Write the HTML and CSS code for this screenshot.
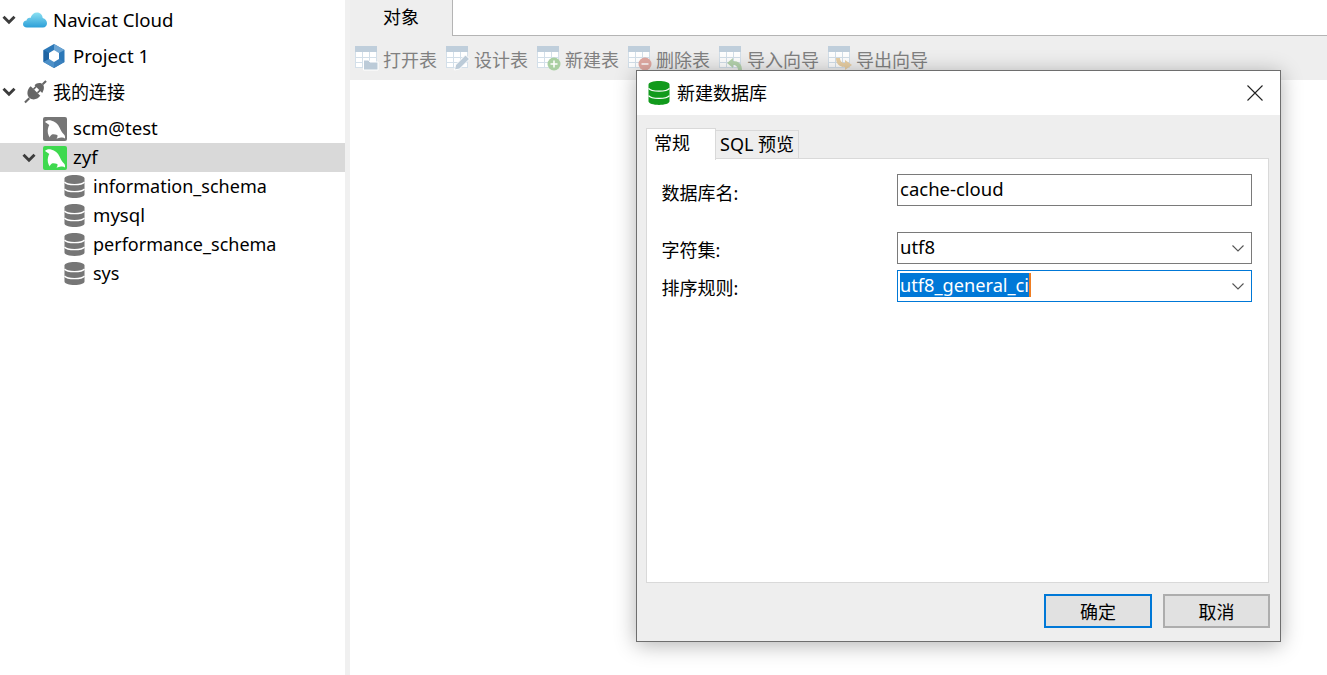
FILE: index.html
```html
<!DOCTYPE html>
<html lang="zh">
<head>
<meta charset="utf-8">
<title>Navicat</title>
<link rel="stylesheet" href="styles.css">
</head>
<body>
<svg class="defs" aria-hidden="true">
  <defs>
    <symbol id="chev" viewBox="0 0 14 10"><path d="M1.500 1.800 7 7.300 12.500 1.800" fill="none" stroke="#3c3c3c" stroke-width="2.900"/></symbol>
    <symbol id="db" viewBox="0 0 22 23" preserveAspectRatio="none">
      <path d="M.5 3.500C.5 1.300 5.500 0 11 0S21.500 1.300 21.500 3.500v16C21.500 21.700 16.500 23 11 23S.5 21.700.5 19.500z" fill="currentColor"/>
      <path d="M.5 7c1.500 1.900 5.500 2.700 10.500 2.700S20 8.900 21.500 7M.5 14c1.500 1.900 5.500 2.700 10.500 2.700s9-.8 10.500-2.700" fill="none" stroke="#fff" stroke-width="1.300"/>
    </symbol>
    <symbol id="dolphin" viewBox="0 0 24 24">
      <rect width="24" height="24" rx="2" fill="currentColor"/>
      <path d="M2 5C3 3.500 6 3 8 3.500 12 4.200 15 7 16.500 10.500 17.500 13 19 15.500 21 17.500 22 18.500 22.200 20 22 21.500 21 20.500 19.500 20.200 18 20.500 16.500 20.800 15 21.300 13.500 21.800 14.500 20.500 14.800 19 14.300 18 12.500 17.500 10.500 17 9 17.500 8 18 7 19 6.800 20.500 5 18 4.200 14.500 5 11.500 5.300 10 5.800 9 6.300 8 5 7 3.500 6 2 5z" fill="#fff"/>
    </symbol>
    <symbol id="table" viewBox="0 0 23 24">
      <rect x=".5" y=".5" width="21" height="21" fill="#fff" stroke="#d3dfe9"/>
      <rect width="22" height="6" fill="#bfcedb"/>
      <path d="M0 11.500h22M0 16.500h22M7.500 6v16M14.500 6v16" stroke="#d3dfe9" fill="none"/>
    </symbol>
  </defs>
</svg>

<div class="app">
  <aside class="sidebar">
    <div class="row row-tall">
      <svg class="chev"><use href="#chev"/></svg>
      <svg class="icon-cloud" viewBox="0 0 24 16">
        <defs><linearGradient id="cloud" x1="0" y1="0" x2="0" y2="1"><stop offset="0" stop-color="#8be0f2"/><stop offset="1" stop-color="#2c9fd8"/></linearGradient></defs>
        <path d="M4 15.500C1.500 15.500 0 14 0 12c0-2 1.500-3.300 3.500-3.500C4 6.500 5.500 5.500 7.500 6 8.500 2.500 11 .5 14 .5c3.500 0 5.500 2.500 5.700 5.500C22.300 6.700 24 9 24 11.300c0 2.500-1.700 4.200-4 4.200z" fill="url(#cloud)"/>
      </svg>
      <span class="label">Navicat Cloud</span>
    </div>
    <div class="row row-tall lvl-1">
      <svg class="icon-hex" viewBox="0 0 22 24">
        <path d="M11 0 21.500 6v12L11 24 .5 18V6z" fill="#2c78b8"/>
        <path d="M11 0 21.500 6 16 9 11 6z" fill="#6ba4d3"/>
        <path d="M.5 6 6 9v6l-5.500 3z" fill="#1f64a3"/>
        <path d="M.5 18 6 15l5 3v6z" fill="#4d90c8"/>
        <path d="M21.500 18 16 15l-5 3v6z" fill="#3a80bd"/>
        <path d="M11 6l5 3v6l-5 3-5-3V9z" fill="#fff"/>
      </svg>
      <span class="label">Project 1</span>
    </div>
    <div class="row row-tall">
      <svg class="chev"><use href="#chev"/></svg>
      <svg class="icon-plug" viewBox="0 0 24 24">
        <path d="M1 23 5.500 18.500M19.500 4 23 .5" stroke="#666" stroke-width="2.200"/>
        <path d="M7 6 17 16C14 20 9 21 5.500 18 2.500 15 3 9.500 7 6z" fill="#666"/>
        <path d="M11 5 19 13C21 10 21.500 6 19.500 4 17.500 2 13.500 2 11 5z" fill="#666"/>
        <path d="M10 9 13 6M14 13l3-3" stroke="#666" stroke-width="1.800"/>
      </svg>
      <span class="label label-cjk">我的连接</span>
    </div>
    <div class="row row-conn lvl-1 first-conn">
      <svg class="icon-conn grey"><use href="#dolphin"/></svg>
      <span class="label">scm@test</span>
    </div>
    <div class="row row-conn lvl-1 selected">
      <svg class="chev chev-inner"><use href="#chev"/></svg>
      <svg class="icon-conn green"><use href="#dolphin"/></svg>
      <span class="label">zyf</span>
    </div>
    <div class="row row-conn lvl-2"><svg class="icon-db grey"><use href="#db"/></svg><span class="label label-long">information_schema</span></div>
    <div class="row row-conn lvl-2"><svg class="icon-db grey"><use href="#db"/></svg><span class="label">mysql</span></div>
    <div class="row row-conn lvl-2"><svg class="icon-db grey"><use href="#db"/></svg><span class="label label-long">performance_schema</span></div>
    <div class="row row-conn lvl-2"><svg class="icon-db grey"><use href="#db"/></svg><span class="label label-long">sys</span></div>
  </aside>

  <div class="splitter"></div>

  <main class="main">
    <div class="tabbar">
      <div class="objtab">对象</div>
      <div class="tabfill"></div>
    </div>
    <div class="toolbar">
      <div class="tool">
        <svg class="tool-icon" viewBox="0 0 23 24"><use href="#table" width="23" height="24"/><path d="M8.500 14h5l1.500 2h8v8H8.500z" fill="#bccbd8" stroke="#fff"/></svg>
        <span class="tool-text">打开表</span>
      </div>
      <div class="tool">
        <svg class="tool-icon" viewBox="0 0 23 24"><use href="#table" width="23" height="24"/><path d="M19.500 9l4 4-10 10-5 1 1-5z" fill="#bccbd8" stroke="#fff"/></svg>
        <span class="tool-text">设计表</span>
      </div>
      <div class="tool">
        <svg class="tool-icon" viewBox="0 0 23 24"><use href="#table" width="23" height="24"/><circle cx="17" cy="18" r="6.500" fill="#a9cfa2"/><path d="M17 14.500v7M13.500 18h7" stroke="#fff" stroke-width="1.500"/></svg>
        <span class="tool-text">新建表</span>
      </div>
      <div class="tool">
        <svg class="tool-icon" viewBox="0 0 23 24"><use href="#table" width="23" height="24"/><circle cx="17" cy="18" r="6.500" fill="#e0a9a2"/><path d="M13.500 18h7" stroke="#fff" stroke-width="1.500"/></svg>
        <span class="tool-text">删除表</span>
      </div>
      <div class="tool">
        <svg class="tool-icon" viewBox="0 0 23 24"><use href="#table" width="23" height="24"/><path d="M8 17l6-5v3c5.500 0 9 3 9 9h-4c0-3-2-5-5-5v3z" fill="#b5d3ae"/></svg>
        <span class="tool-text">导入向导</span>
      </div>
      <div class="tool">
        <svg class="tool-icon" viewBox="0 0 23 24"><use href="#table" width="23" height="24"/><path d="M8 12h4c0 3 2 5 5 5v-3l7 5-7 5v-3c-5.500 0-9-3-9-9z" fill="#e8cfa4"/></svg>
        <span class="tool-text">导出向导</span>
      </div>
    </div>
    <div class="content"></div>
  </main>
</div>

<section class="dialog">
  <header class="dlg-title">
    <svg class="dlg-icon"><use href="#db"/></svg>
    <span class="dlg-title-text">新建数据库</span>
    <svg class="dlg-close" viewBox="0 0 16 16"><path d="M.5.500l15 15M15.500.500l-15 15" stroke="#222" stroke-width="1.100" fill="none"/></svg>
  </header>
  <div class="dlg-body">
    <div class="dlg-tabs">
      <div class="dlg-tab active">常规</div>
      <div class="dlg-tab sql">SQL 预览</div>
    </div>
    <div class="panel">
      <div class="form-row row-name">
        <label class="form-label">数据库名:</label>
        <div class="field"><span class="field-text">cache-cloud</span></div>
      </div>
      <div class="form-row row-charset">
        <label class="form-label">字符集:</label>
        <div class="field"><span class="field-text">utf8</span><svg class="drop" viewBox="0 0 12 7"><path d="M.5.500 6 6l5.500-5.500" fill="none" stroke="#555" stroke-width="1.100"/></svg></div>
      </div>
      <div class="form-row row-collate">
        <label class="form-label">排序规则:</label>
        <div class="field focus"><span class="field-text selected-text">utf8_general_ci</span><svg class="drop" viewBox="0 0 12 7"><path d="M.5.500 6 6l5.500-5.500" fill="none" stroke="#555" stroke-width="1.100"/></svg></div>
      </div>
    </div>
    <div class="dlg-actions">
      <button class="btn primary">确定</button>
      <button class="btn cancel">取消</button>
    </div>
  </div>
</section>
</body>
</html>
```
FILE: styles.css
```css
* { box-sizing: border-box; }
html, body { margin: 0; height: 100%; overflow: hidden; }
body {
  background: #fff;
  color: #000;
  font-family: "Noto Sans", "Noto Sans CJK SC", sans-serif;
  font-size: 18px;
}
.defs { position: absolute; width: 0; height: 0; }
.app { display: flex; height: 675px; }

.sidebar { width: 345px; padding-top: 2px; background: #fff; flex: none; }
.row { display: flex; align-items: center; white-space: nowrap; }
.row-tall { height: 36px; padding-left: 2px; }
.row-conn { height: 29px; }
.first-conn { margin-top: 4px; }
.lvl-1 { padding-left: 43px; }
.lvl-2 { padding-left: 64px; }
.selected { background: #d9d9d9; padding-left: 22px; }
.chev { width: 14px; height: 10px; flex: none; }
.chev-inner { margin-right: 7px; }
.label { font-size: 18.6px; line-height: 24px; }
.label-cjk, .label-long { font-size: 18px; }
.row-conn .label { padding-bottom: 2px; }
.icon-cloud { width: 24px; height: 16px; margin-left: 7px; margin-right: 6px; flex: none; }
.icon-hex { width: 22px; height: 24px; margin-right: 8px; flex: none; }
.icon-plug { width: 23px; height: 24px; margin-left: 8px; margin-right: 6px; flex: none; }
.icon-conn { width: 24px; height: 24px; margin-right: 6px; flex: none; }
.icon-db { width: 21px; height: 23px; margin-right: 8px; margin-bottom: 1px; flex: none; }
.grey { color: #767676; }
.green { color: #3fd94f; }

.splitter { width: 5px; background: #f0f0f0; flex: none; }
.main { flex: 1; display: flex; flex-direction: column; min-width: 0; }
.tabbar { display: flex; height: 36px; background: #eee; }
.objtab { width: 102px; padding-left: 33px; line-height: 34px; font-size: 18px; }
.tabfill { flex: 1; background: #fff; border-left: 1px solid #b4b4b4; border-bottom: 1px solid #b4b4b4; }
.toolbar { display: flex; align-items: center; height: 44px; padding-left: 5px; background: #eee; color: #808080; font-size: 18px; }
.tool { display: flex; align-items: center; gap: 5px; margin-right: 9px; }
.tool-icon { width: 23px; height: 24px; flex: none; overflow: visible; }
.tool-text { padding-top: 2px; }
.content { flex: 1; background: #fff; }

.dialog {
  position: absolute;
  left: 636px;
  top: 70px;
  width: 645px;
  height: 572px;
  display: flex;
  flex-direction: column;
  border: 1px solid #6e6e6e;
  box-shadow: 0 3px 20px rgba(0, 0, 0, .3);
  background: #eee;
}
.dlg-title { display: flex; align-items: center; height: 44px; padding-left: 12px; padding-right: 17px; background: #fff; flex: none; }
.dlg-icon { width: 22px; height: 24px; margin-left: -1px; color: #119a1c; flex: none; }
.dlg-title-text { margin-left: 7px; padding-bottom: 2px; font-size: 18px; flex: 1; }
.dlg-close { width: 16px; height: 16px; flex: none; }
.dlg-body { flex: 1; display: flex; flex-direction: column; padding: 12px 11px 0 9px; min-height: 0; }
.dlg-tabs { display: flex; align-items: flex-end; height: 32px; position: relative; z-index: 1; flex: none; }
.dlg-tab { height: 29px; padding: 0 3px 0 4px; line-height: 27px; border: 1px solid #d9d9d9; border-left: 0; border-bottom: 0; font-size: 18px; white-space: nowrap; }
.dlg-tab.sql { width: 83px; }
.dlg-tab.active { width: 70px; height: 32px; padding-left: 7px; line-height: 28px; background: #fff; border-left: 1px solid #d9d9d9; margin-bottom: -1px; }
.panel { height: 425px; background: #fff; border: 1px solid #d9d9d9; padding: 15px 16px 0 15px; display: flex; flex-direction: column; flex: none; margin-top: -1px; }
.form-row { display: flex; align-items: center; height: 32px; }
.row-charset { margin-top: 26px; }
.row-collate { margin-top: 6px; }
.form-label { width: 235px; margin-left: -.5px; margin-right: .5px; padding-top: 4px; flex: none; font-size: 18px; }
.row-charset .form-label { padding-top: 2px; }
.row-collate .form-label { padding-top: 2px; }
.field { flex: 1; height: 32px; display: flex; align-items: center; justify-content: space-between; padding: 0 7px 0 2px; border: 1px solid #7a7a7a; background: #fff; font-size: 18.5px; }
.field-text { line-height: 24px; margin-top: -2px; }
.field.focus { border-color: #0078d7; }
.selected-text { background: #0078d7; color: #fff; border-right: 2px solid #ef7d22; font-size: 18.2px; }
.drop { width: 12px; height: 7px; flex: none; }
.dlg-actions { display: flex; justify-content: flex-end; gap: 11px; padding-top: 11px; margin-right: -1px; }
.btn { width: 108px; height: 34px; padding: 0; background: #e1e1e1; border: 2px solid #adadad; font: inherit; font-size: 18px; color: #000; }
.btn.cancel { width: 107px; }
.btn.primary { border-color: #0078d7; }
```
